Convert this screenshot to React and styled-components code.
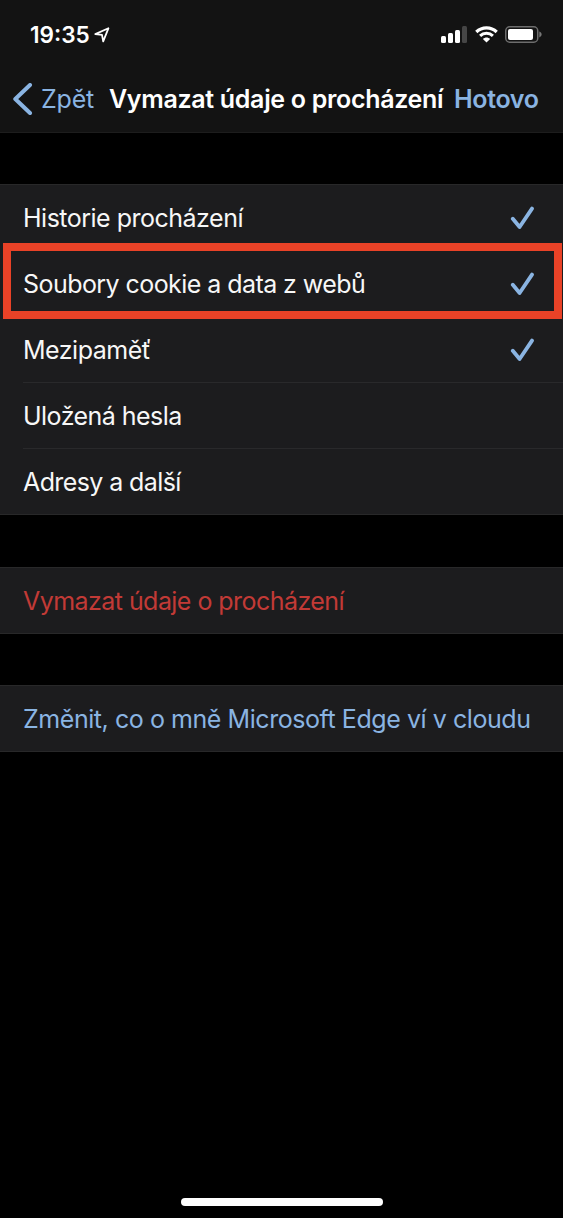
import styled, { createGlobalStyle } from "styled-components";

const GlobalStyle = createGlobalStyle`
  * {
    box-sizing: border-box;
  }

  body {
    margin: 0;
    background: #000;
    font-family: Inter, "Liberation Sans", sans-serif;
    -webkit-font-smoothing: antialiased;
  }
`;

const Screen = styled.div`
  display: flex;
  flex-direction: column;
  width: 563px;
  height: 1218px;
  overflow: hidden;
  background: #000;
`;

const Header = styled.header`
  height: 133px;
  border-bottom: 1px solid #1d1d1d;
  background: #131313;
`;

const StatusBar = styled.div`
  display: flex;
  align-items: center;
  height: 69px;
  padding: 0 21px 0 30px;
`;

const Time = styled.span`
  color: #fff;
  font-size: 22.6px;
  font-weight: 600;
  letter-spacing: 0;
  line-height: 29px;
  margin-right: 4px;
`;

const StatusIcons = styled.div`
  display: flex;
  align-items: center;
  gap: 7px;
  margin-left: auto;
`;

const NavBar = styled.nav`
  display: flex;
  align-items: center;
  height: 60px;
  padding-left: 13px;
`;

const BackButton = styled.button`
  display: flex;
  align-items: center;
  gap: 8px;
  width: 96px;
  padding: 0;
  border: 0;
  background: none;
  color: #8ab4e2;
  font: inherit;
  font-size: 25px;
  letter-spacing: -0.2px;
`;

const Title = styled.h1`
  width: 345px;
  margin: 0;
  color: #fff;
  font-size: 25px;
  font-weight: 600;
  letter-spacing: -0.32px;
  white-space: nowrap;
`;

const DoneButton = styled.button`
  padding: 0;
  border: 0;
  background: none;
  color: #8ab4e2;
  font: inherit;
  font-size: 25px;
  font-weight: 600;
  letter-spacing: -0.35px;
`;

const Group = styled.section`
  margin-top: ${(props) => props.$gap}px;
  border-top: 1px solid #282829;
  border-bottom: 1px solid #282829;
  background: #1c1c1e;
`;

const Row = styled.div`
  position: relative;
  height: ${(props) => props.$height || 66}px;
  padding-left: 23px;
`;

const RowContent = styled.div`
  display: flex;
  align-items: center;
  justify-content: space-between;
  height: 100%;
  padding-right: 28px;
  border-bottom: ${(props) => (props.$divider ? "1px solid #29292b" : "0")};
`;

const Label = styled.span`
  color: ${(props) => props.$color || "#f7f7f7"};
  font-size: 25px;
  line-height: 32px;
  letter-spacing: ${(props) => props.$spacing}px;
  white-space: nowrap;
`;

const Highlight = styled.div`
  position: absolute;
  top: -8px;
  left: 3px;
  width: 559px;
  height: 76px;
  border: 8px solid #e94227;
  z-index: 1;
`;

const HomeIndicator = styled.div`
  width: 202px;
  height: 8px;
  margin: auto auto 12px 181px;
  border-radius: 4px;
  background: #fff;
`;

const LocationIcon = () => (
  <svg width="16" height="16" viewBox="0 0 16 16" fill="none">
    <path
      d="M1.3 7.1L14.4 1.3L9.2 14.4L8 7.9Z"
      stroke="#fff"
      strokeWidth="1.8"
      strokeLinejoin="round"
    />
  </svg>
);

const SignalIcon = () => (
  <svg width="27" height="17" viewBox="0 0 27 17" fill="#fff">
    <rect x="0" y="10" width="5" height="7" rx="1.5" />
    <rect x="7" y="7" width="5" height="10" rx="1.5" />
    <rect x="14" y="4" width="5" height="13" rx="1.5" />
    <rect x="21" y="0" width="5" height="17" rx="1.5" fill="#464646" />
  </svg>
);

const WifiIcon = () => (
  <svg width="23" height="17" viewBox="0 0 23 17" fill="none" stroke="#fff">
    <path d="M1.3 6C7 .4 16 .4 21.7 6" strokeWidth="3.2" />
    <path d="M5.1 9.8C8.7 6.3 14.3 6.3 17.9 9.8" strokeWidth="3" />
    <path d="M11.5 16.6L7.9 13C10 11 13 11 15.1 13Z" fill="#fff" stroke="none" />
  </svg>
);

const BatteryIcon = () => (
  <svg width="37" height="17" viewBox="0 0 37 17">
    <rect x=".75" y=".75" width="32" height="15.5" rx="4" fill="none" stroke="#6d6d6d" strokeWidth="1.5" />
    <rect x="3" y="3" width="25" height="11" rx="2" fill="#fff" />
    <path d="M34.3 5.6C37.4 7 37.4 10 34.3 11.4Z" fill="#777" />
  </svg>
);

const BackIcon = () => (
  <svg width="20" height="32" viewBox="0 0 20 32" fill="none">
    <path d="M17 2L2.3 16L17 30" stroke="#8ab4e2" strokeWidth="4" strokeLinecap="round" strokeLinejoin="round" />
  </svg>
);

const CheckIcon = () => (
  <svg width="25" height="24" viewBox="0 0 25 24" fill="none">
    <path d="M2.8 12.8L9.6 21L22 2.6" stroke="#8ab4e2" strokeWidth="3.8" strokeLinecap="round" strokeLinejoin="round" />
  </svg>
);

const options = [
  { label: "Historie procházení", checked: true, spacing: -0.5 },
  { label: "Soubory cookie a data z webů", checked: true, highlighted: true, spacing: -0.56 },
  { label: "Mezipaměť", checked: true, divider: true, spacing: -0.5 },
  { label: "Uložená hesla", divider: true, spacing: -0.54 },
  { label: "Adresy a další", height: 65, spacing: -0.6 },
];

const App = () => {
  return (
    <>
      <GlobalStyle />
      <Screen>
        <Header>
          <StatusBar>
            <Time>19:35</Time>
            <LocationIcon />
            <StatusIcons>
              <SignalIcon />
              <WifiIcon />
              <BatteryIcon />
            </StatusIcons>
          </StatusBar>
          <NavBar>
            <BackButton>
              <BackIcon />
              Zpět
            </BackButton>
            <Title>Vymazat údaje o procházení</Title>
            <DoneButton>Hotovo</DoneButton>
          </NavBar>
        </Header>

        <Group $gap={51}>
          {options.map(({ label, checked, highlighted, divider, height, spacing }) => (
            <Row key={label} $height={height}>
              <RowContent $divider={divider}>
                <Label $spacing={spacing}>{label}</Label>
                {checked && <CheckIcon />}
              </RowContent>
              {highlighted && <Highlight />}
            </Row>
          ))}
        </Group>

        <Group $gap={52}>
          <Row $height={65}>
            <RowContent>
              <Label $color="#c23a36" $spacing={-0.55}>
                Vymazat údaje o procházení
              </Label>
            </RowContent>
          </Row>
        </Group>

        <Group $gap={51}>
          <Row $height={65}>
            <RowContent>
              <Label $color="#8ab4e2" $spacing={-0.44}>
                Změnit, co o mně Microsoft Edge ví v cloudu
              </Label>
            </RowContent>
          </Row>
        </Group>

        <HomeIndicator />
      </Screen>
    </>
  );
};

export default App;
